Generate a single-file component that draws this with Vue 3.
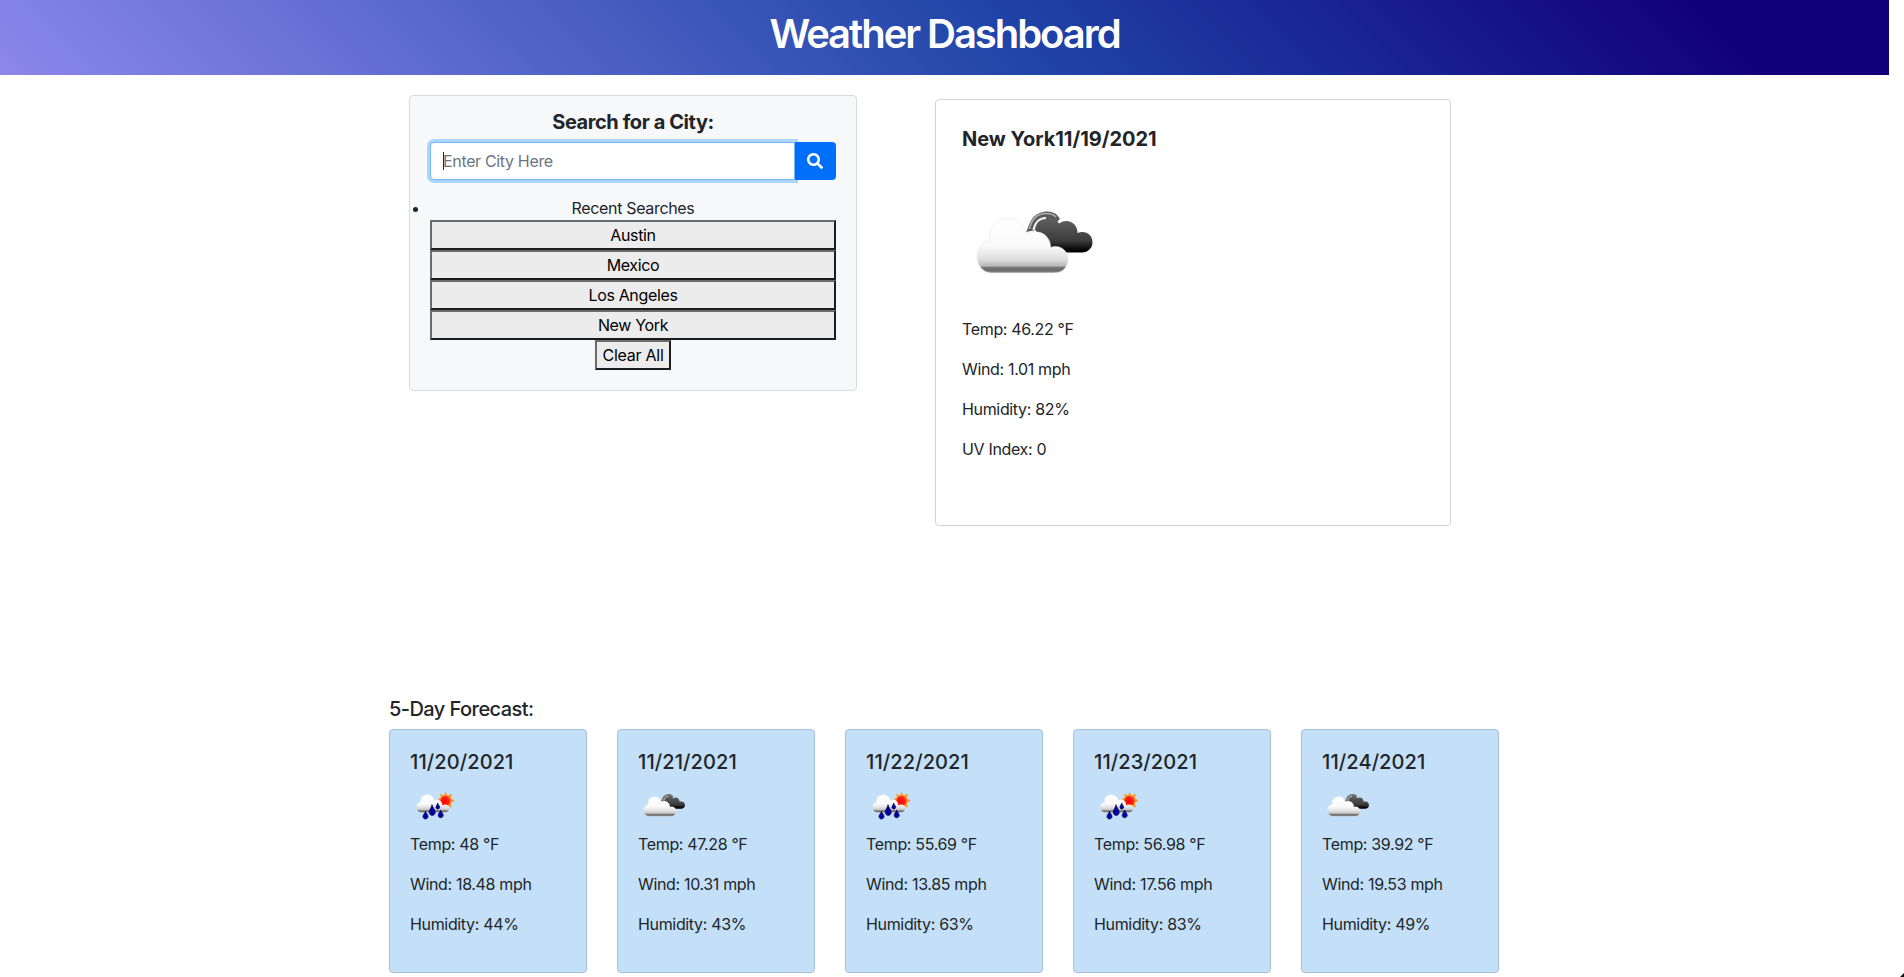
<script setup>
const searches = ['Austin', 'Mexico', 'Los Angeles', 'New York']
const details = ['Temp: 46.22 °F', 'Wind: 1.01 mph', 'Humidity: 82%', 'UV Index: 0']
const forecast = [
  { date: '11/20/2021', icon: 'rain', temp: '48', wind: '18.48', humidity: '44' },
  { date: '11/21/2021', icon: 'clouds', temp: '47.28', wind: '10.31', humidity: '43' },
  { date: '11/22/2021', icon: 'rain', temp: '55.69', wind: '13.85', humidity: '63' },
  { date: '11/23/2021', icon: 'rain', temp: '56.98', wind: '17.56', humidity: '83' },
  { date: '11/24/2021', icon: 'clouds', temp: '39.92', wind: '19.53', humidity: '49' },
]
</script>

<template>
  <div class="page">
    <svg class="defs" width="0" height="0" aria-hidden="true">
      <defs>
        <linearGradient id="white-cloud" x1="0" y1="0" x2="0" y2="1">
          <stop offset="0" stop-color="#ffffff" />
          <stop offset="0.5" stop-color="#fafafa" />
          <stop offset="0.75" stop-color="#dedede" />
          <stop offset="0.87" stop-color="#b8b8b8" />
          <stop offset="0.9" stop-color="#747474" />
          <stop offset="0.96" stop-color="#6c6c6c" />
          <stop offset="1" stop-color="#a0a0a0" />
        </linearGradient>
        <linearGradient id="dark-cloud" x1="0" y1="0" x2="0" y2="1">
          <stop offset="0" stop-color="#606060" />
          <stop offset="0.65" stop-color="#3c3c3c" />
          <stop offset="0.95" stop-color="#000000" />
        </linearGradient>
        <radialGradient id="sun" cx="0.4" cy="0.6" r="0.75">
          <stop offset="0" stop-color="#ff0000" />
          <stop offset="0.55" stop-color="#ff2015" />
          <stop offset="1" stop-color="#ff8b60" />
        </radialGradient>
      </defs>
      <symbol id="clouds" viewBox="0 0 150 150">
        <path d="M64 65 C67 62 67 46 84 44.500 C92 44 96 48 98 52 L90 60 L74 63Z" fill="#5c5c5c" />
        <path d="M67.500 62 C69 53 75 46.500 84 46.500 C89 46.500 92 48 94 50" fill="none" stroke="#b0b0b0" stroke-width="1.500" />
        <path d="M71.500 63 C73 55 78 51 84 51" fill="none" stroke="#f4f4f4" stroke-width="2" />
        <path d="M74 62 C77 52 92 47 97 56.500 C106 50 116 57 115.500 66 C124 63 130.500 68 130.500 75.500 C130.500 81 126 85.500 120 85.500 H94 L86 82 V76 C86 69 82 65 74 65Z" fill="url(#dark-cloud)" />
        <path d="M28 106 C11 103 11 77 28 73 C25 47 61 45 64 66.500 C77 61 89 69 88.500 80.500 C98 77 106 84 106 92 C106 100 101 106 92 106Z" fill="url(#white-cloud)" stroke="#e8e8e8" stroke-width="0.700" />
      </symbol>
      <symbol id="rain" viewBox="0 0 54 54">
        <path d="M35.700 13.800 L37.500 17.500 L42 15.700 L40.800 20 L44.600 22.700 L40.800 25 L42 29.500 L37 28 L33 28 L30 24 L27.800 20.700 L31 19.500 L30 15.800 L34 17.500Z" fill="#ff9a24" />
        <circle cx="35.600" cy="22.600" r="5.200" fill="url(#sun)" />
        <path d="M11 34.500 C4.500 33 5 25 10.500 24 C10 14.500 23 14.500 24.300 22.500 C29 20.500 32.500 23.500 32 27.500 C36 25 39.500 27.500 39.300 30.300 C39 33 37.500 34.500 34 34.500Z" fill="url(#white-cloud)" />
        <g fill="#0000a0" stroke="#000050" stroke-width="0.700">
          <path d="M22 26.700 C21.500 30 19.200 31.500 19.200 34.300 C19.200 38.400 25.200 38.400 25.200 34.300 C25.200 31.500 22.800 30 22 26.700Z" />
          <path d="M15.500 33.300 C15 35.500 13 36.500 13 38.500 C13 41.800 18 41.800 18 38.500 C18 36.500 16 35.500 15.500 33.300Z" />
          <path d="M30.600 32 C30.200 34.200 28.200 35.200 28.200 37.300 C28.200 40.500 33.200 40.500 33.200 37.300 C33.200 35.200 31.200 34.200 30.600 32Z" />
          <path d="M27.700 25 C27.400 26.800 26 27.700 26 29.200 C26 31.600 29.600 31.600 29.600 29.200 C29.600 27.700 28 26.800 27.700 25Z" />
        </g>
      </symbol>
    </svg>

    <header class="banner"><h1>Weather Dashboard</h1></header>

    <main>
      <div class="top">
        <section class="search-card">
          <h2 class="search-title">Search for a City:</h2>
          <form class="search" @submit.prevent>
            <div class="field"><span class="caret"></span><input type="text" placeholder="Enter City Here" /></div>
            <button class="go" type="submit" aria-label="Search">
              <svg viewBox="0 0 512 512" width="16" height="16"><path fill="currentColor" d="M505 442.700 405.300 343c-4.500-4.500-10.600-7-17-7H372c27.600-35.300 44-79.700 44-128C416 93.100 322.900 0 208 0S0 93.100 0 208s93.100 208 208 208c48.300 0 92.700-16.400 128-44v16.300c0 6.400 2.500 12.500 7 17l99.700 99.700c9.400 9.400 24.600 9.400 33.900 0l28.300-28.300c9.400-9.400 9.400-24.600.1-34zM208 336c-70.700 0-128-57.200-128-128 0-70.700 57.200-128 128-128 70.700 0 128 57.200 128 128 0 70.700-57.200 128-128 128z" /></svg>
            </button>
          </form>
          <ul class="recent">
            <li>Recent Searches</li>
          </ul>
          <div class="history">
            <button v-for="city in searches" :key="city" class="city">{{ city }}</button>
            <button class="clear">Clear All</button>
          </div>
        </section>

        <section class="current">
          <h2>New York11/19/2021</h2>
          <svg class="big-icon"><use href="#clouds" /></svg>
          <p v-for="line in details" :key="line">{{ line }}</p>
        </section>
      </div>

      <h3 class="forecast-title">5-Day Forecast:</h3>
      <div class="forecast">
        <article v-for="day in forecast" :key="day.date" class="day">
          <h3>{{ day.date }}</h3>
          <svg class="small-icon"><use :href="'#' + day.icon" /></svg>
          <p>Temp: {{ day.temp }} °F</p>
          <p>Wind: {{ day.wind }} mph</p>
          <p>Humidity: {{ day.humidity }}%</p>
        </article>
      </div>
    </main>
    <span class="corner"></span>
  </div>
</template>

<style>
body { margin: 0; background: #fff; overflow: hidden; }
</style>

<style scoped>
* { box-sizing: border-box; }
.page {
  position: relative;
  height: 977px;
  overflow: hidden;
  color: #212529;
  font: 400 16px/24px Inter, "Liberation Sans", sans-serif;
  letter-spacing: -0.34px;
}
.defs { position: absolute; }
.corner {
  position: absolute;
  right: 0;
  bottom: 0;
  width: 4px;
  height: 4px;
  background: #111;
  clip-path: polygon(100% 0, 100% 100%, 0 100%);
}
h1, h2, h3, p, ul { margin: 0; padding: 0; }
.banner {
  width: 1889px;
  height: 75px;
  padding-top: 10px;
  text-align: center;
  color: #fff;
  background: linear-gradient(45deg, #8c87eb 0%, #2045a8 53%, #12007a 90%);
}
h1 { font-size: 40px; font-weight: 600; line-height: 48px; letter-spacing: -2.05px; }
main { width: 1110px; margin-left: 389px; }
.top { display: flex; align-items: flex-start; height: 621px; padding-top: 20px; }
.search-card {
  width: 448px;
  height: 296px;
  margin-left: 20px;
  padding: 14px 20px 0;
  border: 1px solid #d9dadb;
  border-radius: 4px;
  background: #f7f8fa;
  text-align: center;
}
h2 { font-size: 20px; font-weight: 700; line-height: 24px; letter-spacing: -0.02px; }
.search-title { letter-spacing: -0.42px; }
.search { display: flex; height: 38px; margin-top: 8px; }
.field {
  display: flex;
  align-items: center;
  width: 365px;
  padding-left: 12px;
  border: 1px solid #72b6fb;
  border-radius: 4px 0 0 4px;
  background: #fff;
  box-shadow: 0 0 0 3px #acd5fa;
}
.caret { width: 1px; height: 18px; margin-right: -1px; background: #212529; }
input { flex: 1; min-width: 0; padding: 0; border: 0; outline: 0; background: none; font: inherit; letter-spacing: inherit; }
input::placeholder { color: #6c757d; opacity: 1; }
.go {
  position: relative;
  display: grid;
  place-items: center;
  width: 41px;
  padding: 0 1px 0 0;
  border: 0;
  border-radius: 0 4px 4px 0;
  color: #fff;
  background: #0070fa;
}
.recent { margin-top: 16px; }
.history { display: flex; flex-direction: column; align-items: center; }
.city, .clear {
  height: 30px;
  padding: 1px 5px;
  border: 2px solid;
  border-color: #6b6b6b #1c1c1c #1c1c1c #6b6b6b;
  border-radius: 0;
  background: #ececec;
  color: #000;
  font: inherit;
  letter-spacing: inherit;
  white-space: nowrap;
}
.city { width: 100%; }
.clear { width: 76px; letter-spacing: -0.25px; }
.current {
  width: 516px;
  height: 427px;
  margin: 4px 0 0 78px;
  padding: 27px 26px 0;
  border: 1px solid #d4d5d6;
  border-radius: 4px;
}
.big-icon { display: block; width: 150px; height: 150px; margin-top: 16px; }
.current p { margin-bottom: 16px; }
.forecast-title { font-size: 20px; font-weight: 500; line-height: 24px; margin-top: 1px; letter-spacing: -0.56px; }
.forecast { display: flex; gap: 30px; margin-top: 8px; }
.day {
  width: 198px;
  height: 244px;
  padding: 20px 20px 0;
  border: 1px solid #a7c0d8;
  border-radius: 4px;
  background: #c4e0f8;
}
.day h3 { font-size: 20px; font-weight: 500; line-height: 24px; letter-spacing: 0.1px; }
.small-icon { display: block; width: 54px; height: 54px; margin-top: 4px; }
.day p { margin-bottom: 16px; }
</style>
